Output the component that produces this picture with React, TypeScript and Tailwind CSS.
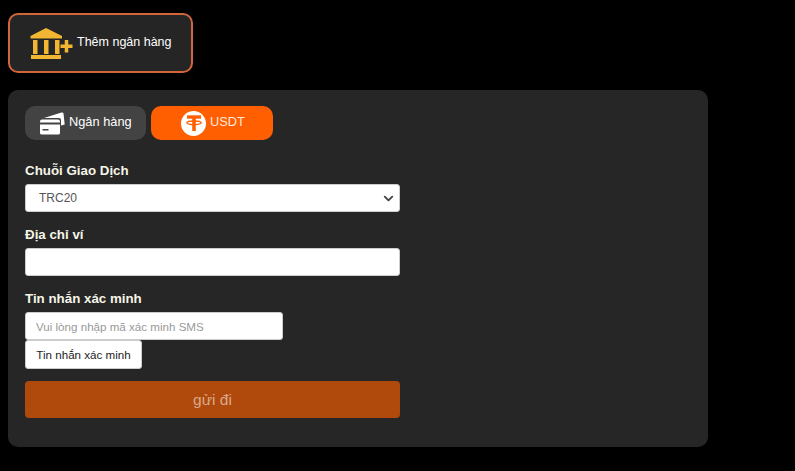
import React from 'react';
import { ChevronDown } from 'lucide-react';

const BankPlusIcon = () => (
  <svg width="43" height="31" viewBox="0 0 43 31" fill="#f2b632">
    <path d="M16 0 L32 8 V10.5 H0.5 V8 Z" />
    <rect x="3" y="12" width="4.5" height="14" />
    <rect x="14" y="12" width="4.5" height="14" />
    <rect x="25" y="12" width="4.5" height="14" />
    <rect x="1" y="27" width="30" height="4" />
    <rect x="30.5" y="16.5" width="12" height="3.5" />
    <rect x="34.75" y="12" width="3.5" height="12.5" />
  </svg>
);

const CardsIcon = () => (
  <svg width="26" height="23" viewBox="0 0 26 23" fill="#fff">
    <path d="M5 6 L22.5 0.5 Q24.2 0.2 24.5 1.5 L25.7 12.5 L22 13.5 V8 Q22 6 20 6 Z" />
    <path d="M1 10.5 V9.5 Q1 7.5 3 7.5 H19 Q21 7.5 21 9.5 V10.5 Z" />
    <path d="M1 12.5 H21 V21 Q21 22.5 19 22.5 H3 Q1 22.5 1 21 Z" />
    <rect x="3.5" y="17" width="6" height="1.5" fill="#434343" />
  </svg>
);

const TetherIcon = () => (
  <span className="flex h-[25px] w-[25px] items-center justify-center rounded-full bg-white">
    <svg width="18" height="18" viewBox="0 0 18 18" fill="none" stroke="#ff5f00">
      <path d="M2 3 H16" strokeWidth="3.4" />
      <path d="M9 3 V17" strokeWidth="3.6" />
      <ellipse cx="9" cy="8.8" rx="7.2" ry="1.8" strokeWidth="1.3" />
    </svg>
  </span>
);

const labelClass = 'block text-[13.33px] font-bold leading-[18px] text-[#f5f5e8]';

export default function App() {
  return (
    <div className="h-[471px] w-[795px] overflow-hidden bg-black px-2 pt-[13px] font-['Liberation_Sans',Arial,sans-serif]">
      <button className="flex h-[60px] w-[185px] items-center rounded-[10px] border-2 border-[#d2653a] bg-[#252525] pl-[20px] text-[12.5px] text-white">
        <BankPlusIcon />
        <span className="ml-[4px] -mt-[2px]">Thêm ngân hàng</span>
      </button>

      <div className="mt-[17px] h-[357px] w-[700px] rounded-[10px] bg-[#262626] px-[17px] pt-4">
        <div className="flex gap-[5px]">
          <button className="flex h-[34px] w-[121px] items-center rounded-[10px] bg-[#434343] pl-[14px] text-[12.8px] text-white">
            <CardsIcon />
            <span className="ml-[4px] -mt-[3px]">Ngân hàng</span>
          </button>
          <button className="flex h-[34px] w-[122px] items-center rounded-[10px] bg-[#ff5f00] pl-[30px] text-[12.8px] text-[#ffe9dc]">
            <TetherIcon />
            <span className="ml-[4px] -mt-[3px]">USDT</span>
          </button>
        </div>

        <div className="mt-[22px] w-[375px]">
          <label className={labelClass}>Chuỗi Giao Dịch</label>
          <div className="relative mt-[4px] flex h-[28px] items-center rounded-[3px] border border-[#ccc] bg-white pl-[13px] text-[12px] text-[#555]">
            TRC20
            <ChevronDown className="absolute right-[3px] top-[6px] h-[15px] w-[15px] text-[#444]" strokeWidth={3} />
          </div>

          <label className={`${labelClass} mt-[14px]`}>Địa chỉ ví</label>
          <input className="mt-[4px] block h-[28px] w-full rounded-[3px] border border-[#ccc] bg-white" />

          <label className={`${labelClass} mt-[14px]`}>Tin nhắn xác minh</label>
          <input
            className="mt-[4px] block h-[28px] w-[258px] rounded-[3px] border border-[#ccc] bg-white px-[10px] text-[11.6px] placeholder:text-[#999]"
            placeholder="Vui lòng nhập mã xác minh SMS"
          />
          <button className="block h-[29px] w-[117px] rounded-[3px] border border-[#ccc] bg-white text-[11.6px] text-[#222]">
            Tin nhắn xác minh
          </button>

          <button className="mt-[12px] block h-[37px] w-full rounded-[4px] bg-[#b04a0c] text-[15.5px] text-[#dba98a]">
            gửi đi
          </button>
        </div>
      </div>
    </div>
  );
}
